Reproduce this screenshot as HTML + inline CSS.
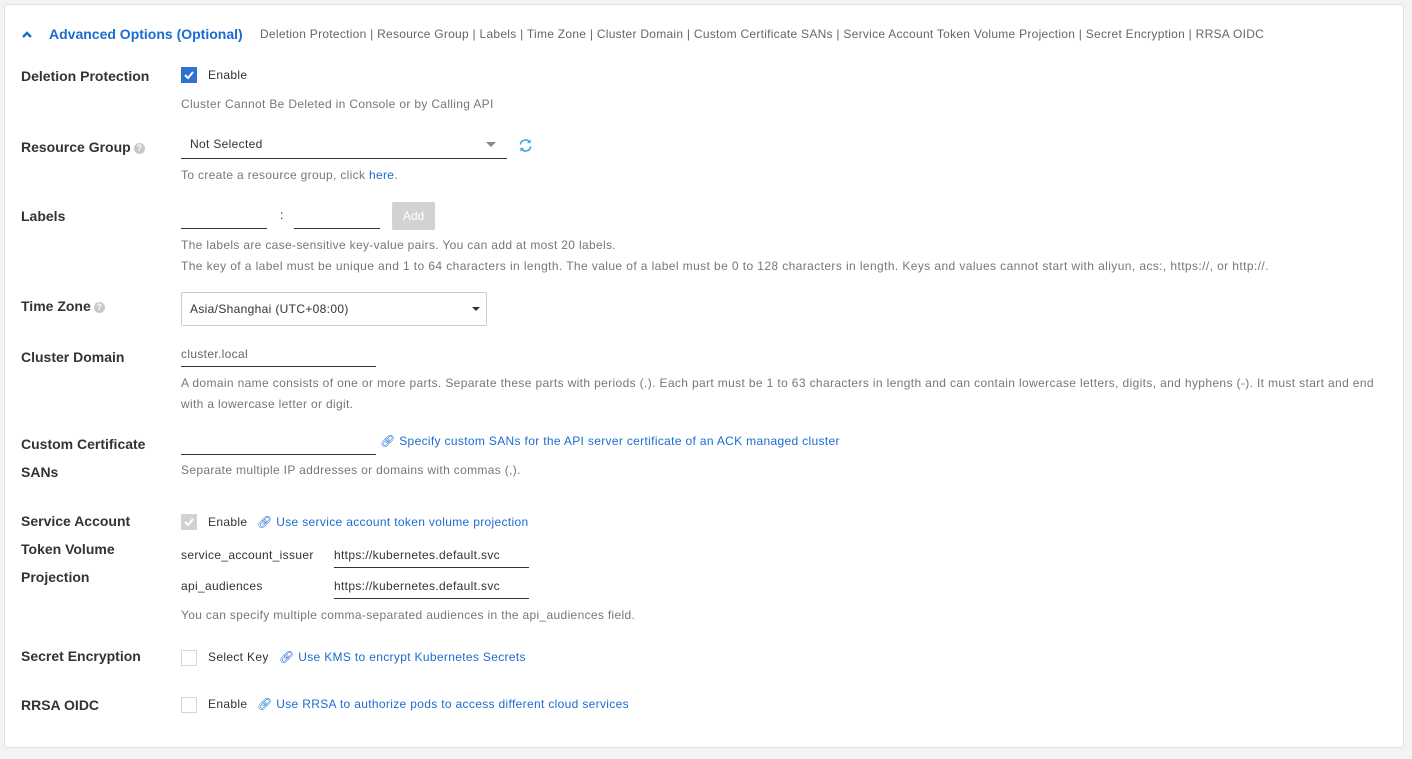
<!DOCTYPE html>
<html><head><meta charset="utf-8"><style>
*{box-sizing:border-box;margin:0;padding:0}
body{width:1412px;height:759px;background:#f2f3f5;font-family:"Liberation Sans",sans-serif;position:relative;overflow:hidden;color:#333}
.card{position:absolute;left:4px;top:4px;width:1400px;height:744px;background:#fff;border:1px solid #dcdfe3;border-radius:3px}
.a{position:absolute;white-space:nowrap;line-height:1}
.lbl{font-size:14px;font-weight:bold;color:#333}
.t{font-size:12px;color:#333;letter-spacing:0.33px}
.h{font-size:12px;color:#777;letter-spacing:0.33px}
.lnk{font-size:12px;color:#1b6ccf;letter-spacing:0.33px}
.ul{position:absolute;border-bottom:1px solid #333;height:1px}
.cb{position:absolute;width:16px;height:16px;border:1px solid #d5d5d5;background:#fff}
.q{display:inline-block;width:11px;height:11px;border-radius:50%;background:#c8c8c8;color:#fff;font-size:9px;text-align:center;line-height:11px;vertical-align:1px;margin-left:3px;font-weight:bold}
</style></head><body>
<div class="card"></div>
<svg class="a" style="left:21px;top:30px" width="12" height="9" viewBox="0 0 12 9"><path d="M2 7 L6 3 L10 7" stroke="#1b6ccf" stroke-width="2.4" fill="none"/></svg>
<div class="a" style="left:49px;top:27px;font-size:14px;font-weight:bold;color:#1b6ccf">Advanced Options (Optional)</div>
<div class="a h" style="left:260px;top:28px;color:#666;letter-spacing:0.27px">Deletion Protection | Resource Group | Labels | Time Zone | Cluster Domain | Custom Certificate SANs | Service Account Token Volume Projection | Secret Encryption | RRSA OIDC</div>

<div class="a lbl" style="left:21px;top:69px">Deletion Protection</div>
<div class="cb" style="left:181px;top:67px;background:#2f73d1;border-color:#2f73d1"></div>
<svg class="a" style="left:181px;top:67px" width="16" height="16"><path d="M4 8 L7 11 L12 5" stroke="#fff" stroke-width="2" fill="none"/></svg>
<div class="a t" style="left:208px;top:69px">Enable</div>
<div class="a h" style="left:181px;top:98px">Cluster Cannot Be Deleted in Console or by Calling API</div>

<div class="a lbl" style="left:21px;top:140px">Resource Group<span class="q">?</span></div>
<div class="a t" style="left:190px;top:138px">Not Selected</div>
<svg class="a" style="left:486px;top:142px" width="10" height="6"><path d="M0 0 L10 0 L5 5Z" fill="#888"/></svg>
<div class="ul" style="left:181px;top:158px;width:326px"></div>
<svg class="a" style="left:518px;top:138px" width="15" height="15" viewBox="0 0 16 16"><path d="M2.5 7 A5.5 5.5 0 0 1 12.5 4.5 M13.5 9 A5.5 5.5 0 0 1 3.5 11.5" stroke="#3fa9e0" stroke-width="1.8" fill="none"/><path d="M13.5 1.5 L13.5 5.5 L9.5 5.5Z M2.5 14.5 L2.5 10.5 L6.5 10.5Z" fill="#3fa9e0"/></svg>
<div class="a h" style="left:181px;top:169px">To create a resource group, click <span style="color:#1b6ccf">here</span>.</div>

<div class="a lbl" style="left:21px;top:209px">Labels</div>
<div class="ul" style="left:181px;top:228px;width:86px"></div>
<div class="a t" style="left:280px;top:209px">:</div>
<div class="ul" style="left:294px;top:228px;width:86px"></div>
<div class="a" style="left:392px;top:202px;width:43px;height:28px;background:#d2d2d2;color:#fff;font-size:12px;text-align:center;line-height:28px;border-radius:2px">Add</div>
<div class="a h" style="left:181px;top:239px">The labels are case-sensitive key-value pairs. You can add at most 20 labels.</div>
<div class="a h" style="left:181px;top:260px;letter-spacing:0.4px">The key of a label must be unique and 1 to 64 characters in length. The value of a label must be 0 to 128 characters in length. Keys and values cannot start with aliyun, acs:, https://, or http://.</div>

<div class="a lbl" style="left:21px;top:299px">Time Zone<span class="q">?</span></div>
<div class="a" style="left:181px;top:292px;width:306px;height:34px;border:1px solid #ccc;border-radius:2px"></div>
<div class="a t" style="left:190px;top:303px">Asia/Shanghai (UTC+08:00)</div>
<svg class="a" style="left:472px;top:307px" width="8" height="5"><path d="M0 0 L8 0 L4 4Z" fill="#333"/></svg>

<div class="a lbl" style="left:21px;top:350px">Cluster Domain</div>
<div class="a h" style="left:181px;top:348px;color:#666">cluster.local</div>
<div class="ul" style="left:181px;top:366px;width:195px"></div>
<div class="a h" style="left:181px;top:377px;letter-spacing:0.36px">A domain name consists of one or more parts. Separate these parts with periods (.). Each part must be 1 to 63 characters in length and can contain lowercase letters, digits, and hyphens (-). It must start and end</div>
<div class="a h" style="left:181px;top:398px">with a lowercase letter or digit.</div>

<div class="a lbl" style="left:21px;top:437px">Custom Certificate</div>
<div class="a lbl" style="left:21px;top:465px">SANs</div>
<div class="ul" style="left:181px;top:454px;width:195px"></div>
<div class="a lnk" style="left:380px;top:435px">🔗︎ Specify custom SANs for the API server certificate of an ACK managed cluster</div>
<div class="a h" style="left:181px;top:464px">Separate multiple IP addresses or domains with commas (,).</div>

<div class="a lbl" style="left:21px;top:514px">Service Account</div>
<div class="a lbl" style="left:21px;top:542px">Token Volume</div>
<div class="a lbl" style="left:21px;top:570px">Projection</div>
<div class="cb" style="left:181px;top:514px;background:#d2d2d2;border-color:#d2d2d2"></div>
<svg class="a" style="left:181px;top:514px" width="16" height="16"><path d="M4 8 L7 11 L12 5" stroke="#fff" stroke-width="2" fill="none"/></svg>
<div class="a t" style="left:208px;top:516px">Enable</div>
<div class="a lnk" style="left:257px;top:516px">🔗︎ Use service account token volume projection</div>
<div class="a t" style="left:181px;top:549px">service_account_issuer</div>
<div class="a t" style="left:334px;top:549px">https://kubernetes.default.svc</div>
<div class="ul" style="left:334px;top:567px;width:195px"></div>
<div class="a t" style="left:181px;top:580px">api_audiences</div>
<div class="a t" style="left:334px;top:580px">https://kubernetes.default.svc</div>
<div class="ul" style="left:334px;top:598px;width:195px"></div>
<div class="a h" style="left:181px;top:609px">You can specify multiple comma-separated audiences in the api_audiences field.</div>

<div class="a lbl" style="left:21px;top:649px">Secret Encryption</div>
<div class="cb" style="left:181px;top:650px"></div>
<div class="a t" style="left:208px;top:651px">Select Key</div>
<div class="a lnk" style="left:279px;top:651px">🔗︎ Use KMS to encrypt Kubernetes Secrets</div>

<div class="a lbl" style="left:21px;top:698px">RRSA OIDC</div>
<div class="cb" style="left:181px;top:697px"></div>
<div class="a t" style="left:208px;top:698px">Enable</div>
<div class="a lnk" style="left:257px;top:698px">🔗︎ Use RRSA to authorize pods to access different cloud services</div>
</body></html>
